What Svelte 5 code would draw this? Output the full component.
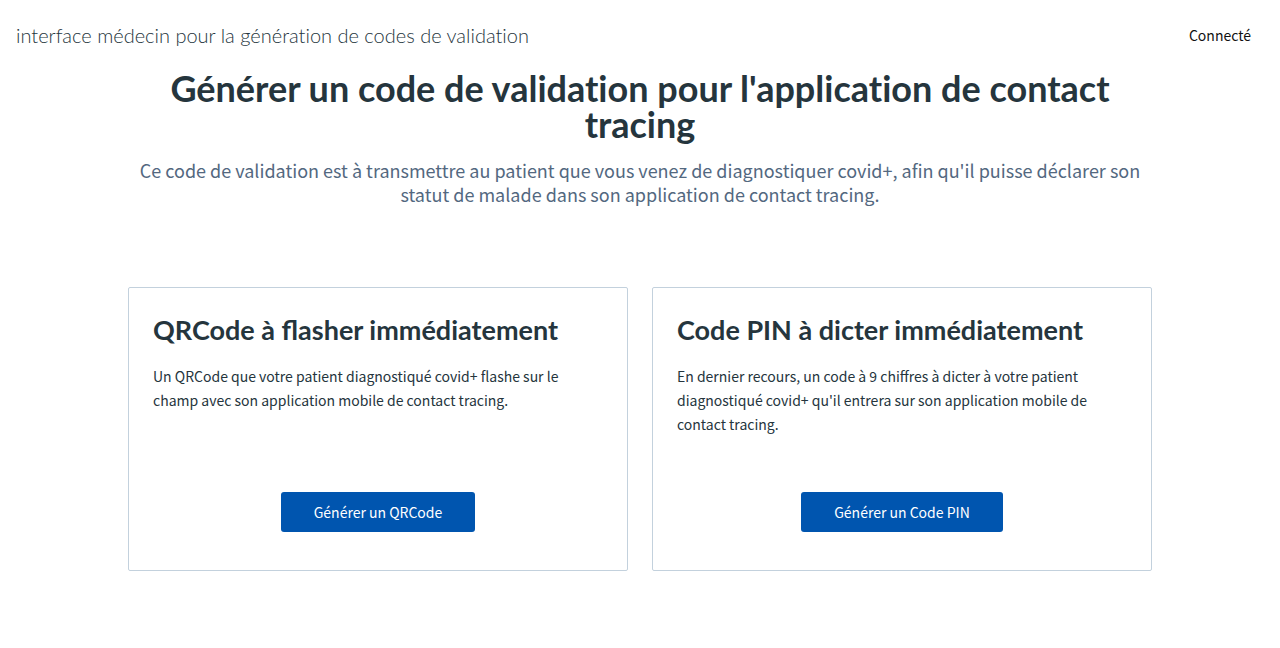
<script>
  const cards = [
    {
      title: 'QRCode à flasher immédiatement',
      text: 'Un QRCode que votre patient diagnostiqué covid+ flashe sur le champ avec son application mobile de contact tracing.',
      action: 'Générer un QRCode'
    },
    {
      title: 'Code PIN à dicter immédiatement',
      text: "En dernier recours, un code à 9 chiffres à dicter à votre patient diagnostiqué covid+ qu'il entrera sur son application mobile de contact tracing.",
      action: 'Générer un Code PIN'
    }
  ];
</script>

<header>
  <span class="brand">interface médecin pour la génération de codes de validation</span>
  <span class="status">Connecté</span>
</header>

<main>
  <section class="hero">
    <h1>Générer un code de validation pour l'application de contact tracing</h1>
    <p>Ce code de validation est à transmettre au patient que vous venez de diagnostiquer covid+, afin qu'il puisse déclarer son statut de malade dans son application de contact tracing.</p>
  </section>

  <div class="cards">
    {#each cards as card}
      <article>
        <h2>{card.title}</h2>
        <p>{card.text}</p>
        <button type="button">{card.action}</button>
      </article>
    {/each}
  </div>
</main>

<style>
  :global(body) {
    margin: 0;
    background: #fff;
    color: #25353d;
    font-family: "Noto Sans CJK SC", "Noto Sans", sans-serif;
    font-size: 14px;
    line-height: 24px;
  }

  header {
    display: flex;
    justify-content: space-between;
    align-items: center;
    padding: 23px 29px 0 16px;
  }

  .brand {
    font-family: Lato, sans-serif;
    font-size: 20px;
    font-weight: 300;
    font-variant-ligatures: none;
  }

  .status {
    color: #111;
  }

  main {
    max-width: 1024px;
    margin: 0 auto;
    padding-top: 23px;
  }

  .hero {
    text-align: center;
  }

  h1,
  h2 {
    margin: 0;
    font-family: Lato, sans-serif;
    font-weight: 700;
  }

  h1 {
    font-size: 36px;
    line-height: 36px;
    font-variant-ligatures: none;
  }

  .hero p {
    margin: 16px 0 0;
    color: #53687f;
    font-size: 18px;
  }

  .cards {
    display: grid;
    grid-template-columns: repeat(2, minmax(0, 1fr));
    gap: 24px;
    margin-top: 81px;
  }

  article {
    display: flex;
    flex-direction: column;
    align-items: center;
    padding: 24px 24px 38px;
    border: 1px solid #c3d1dd;
    border-radius: 2px;
  }

  h2 {
    align-self: stretch;
    font-size: 27px;
    line-height: 36px;
  }

  article p {
    align-self: stretch;
    flex: 1;
    margin: 16px 0 56px;
  }

  button {
    height: 40px;
    padding: 0 33px;
    border: 0;
    border-radius: 3px;
    background: #0055af;
    color: #fff;
    font: inherit;
    cursor: pointer;
  }
</style>
